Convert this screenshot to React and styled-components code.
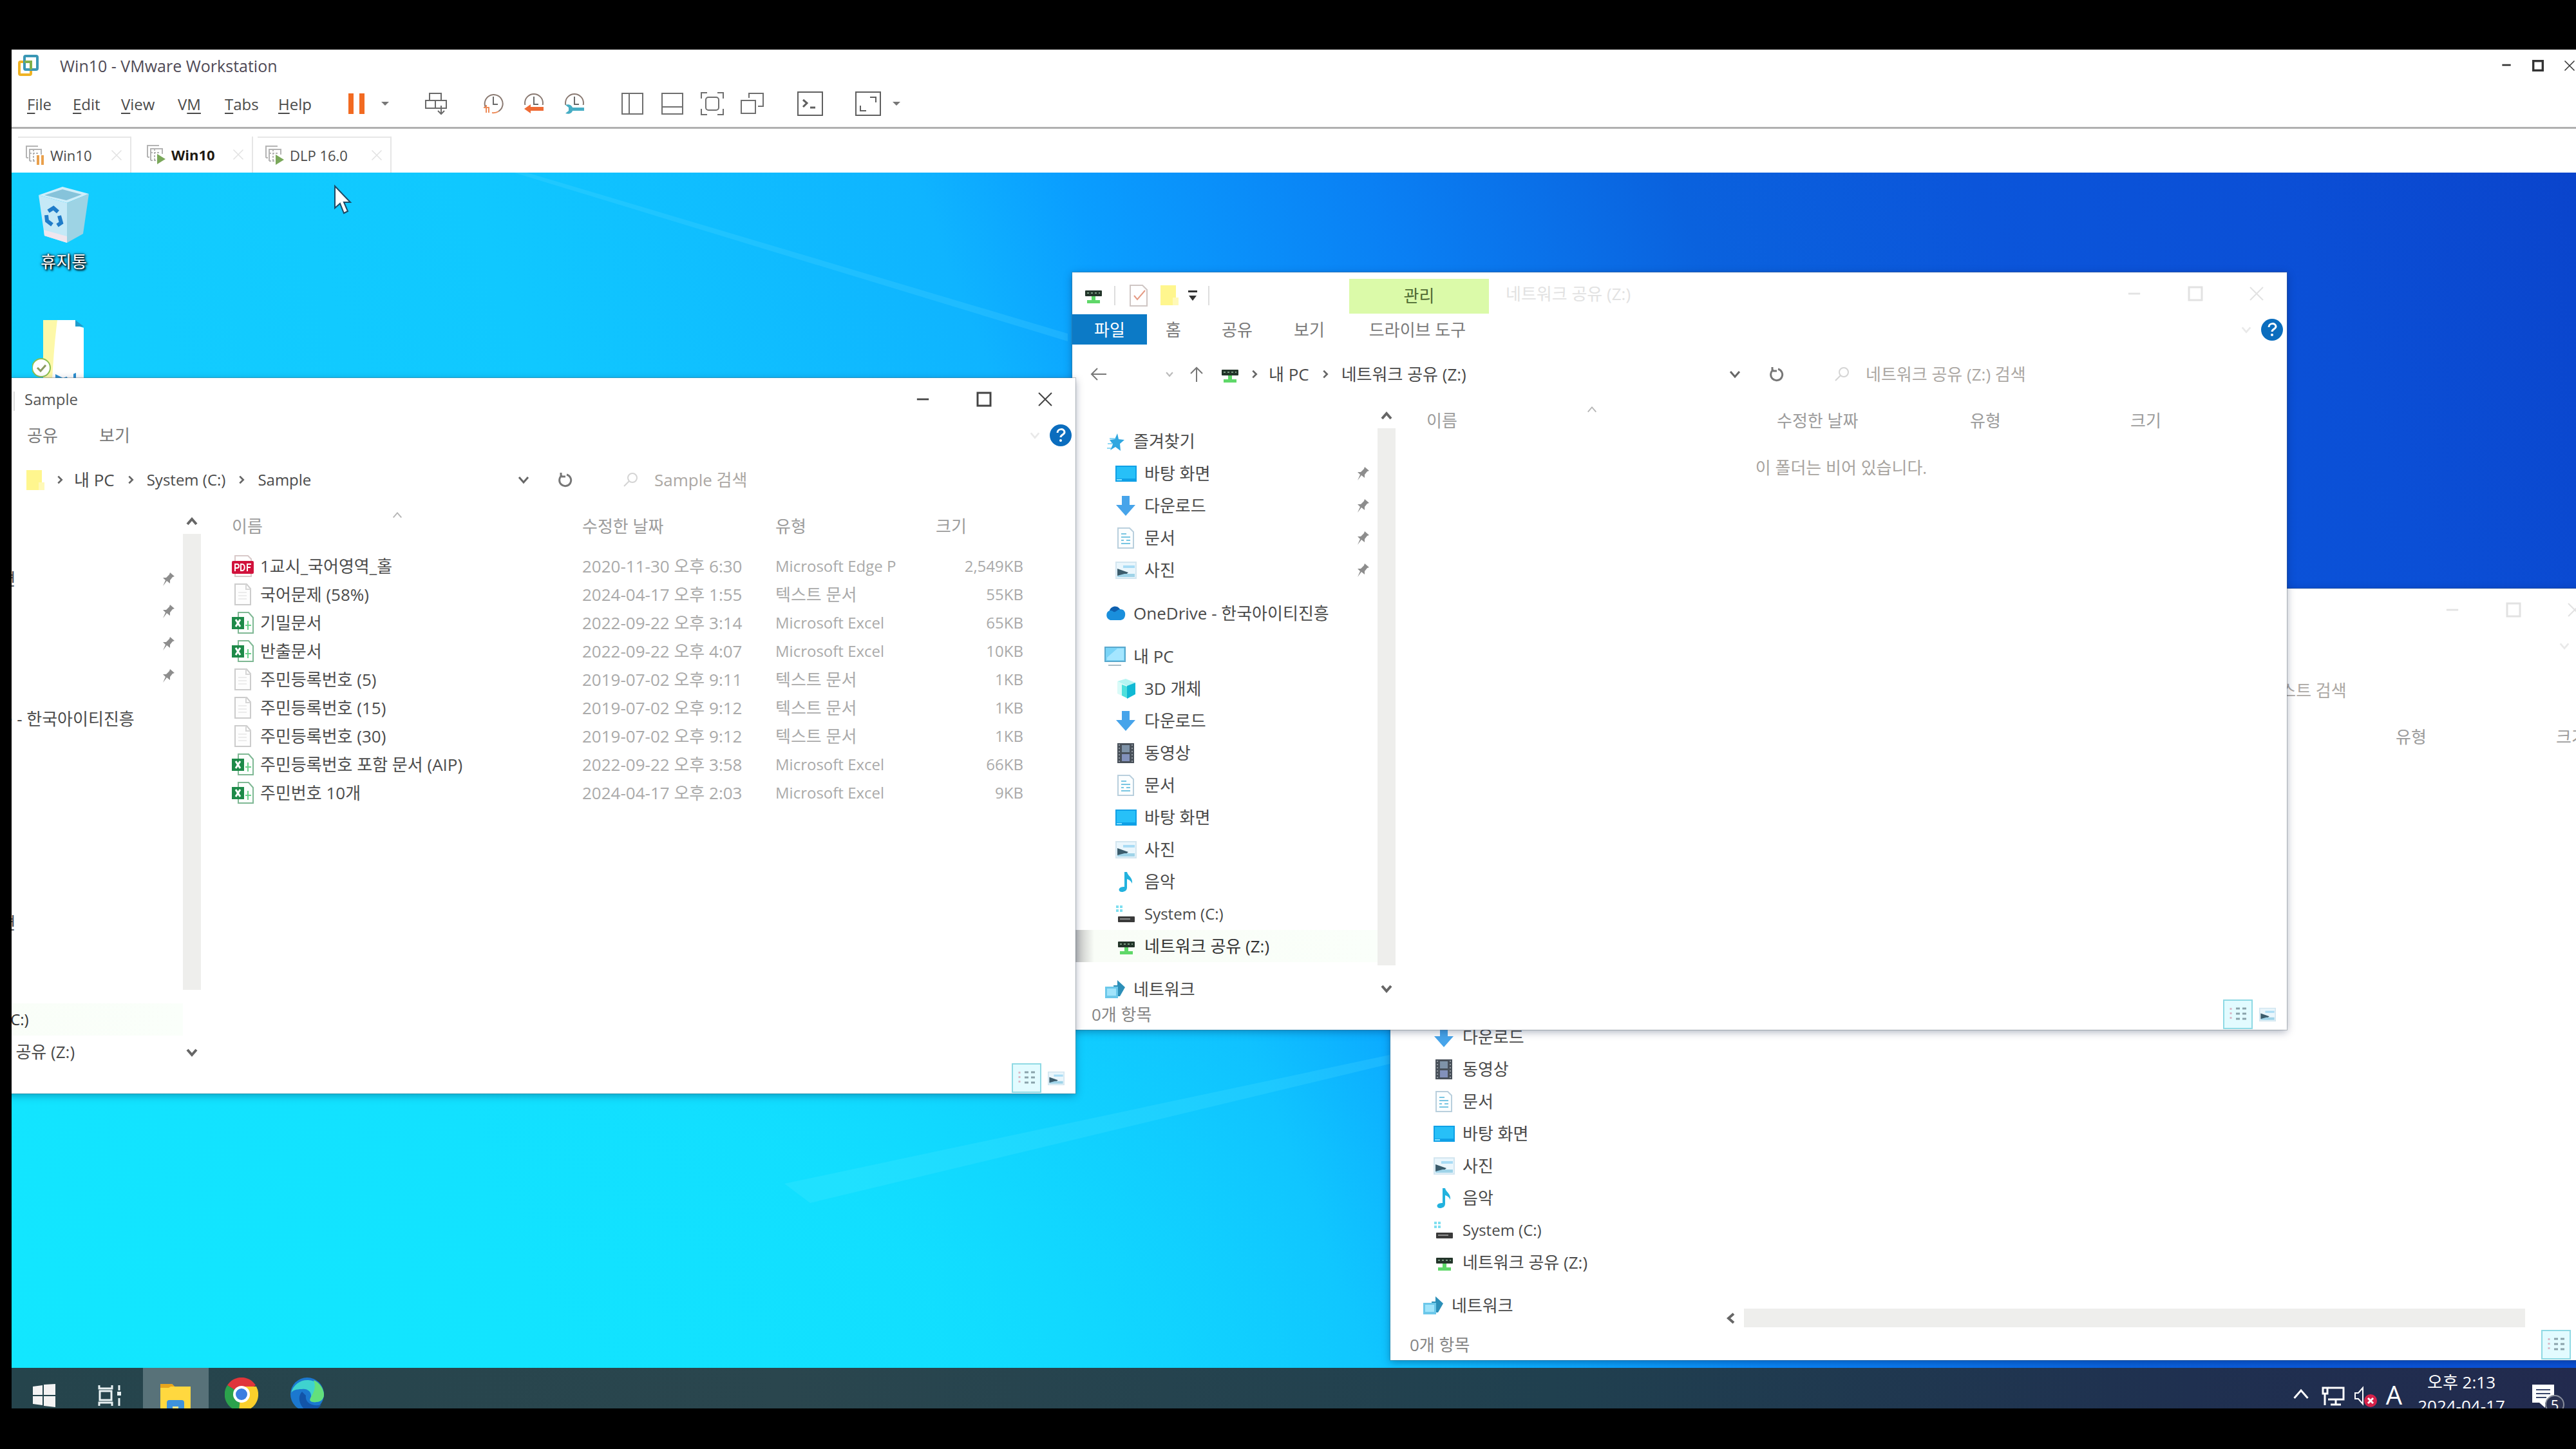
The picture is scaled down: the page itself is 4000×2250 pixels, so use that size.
import React from "react";
import styled, { createGlobalStyle, css } from "styled-components";

const GlobalStyle = createGlobalStyle`
  * {
    box-sizing: border-box;
  }
  body {
    margin: 0;
    background: #000000;
    font-family: "Open Sans", "Noto Sans CJK KR", sans-serif;
    font-size: 26px;
    color: #4a4a4a;
  }
  button,
  input {
    font: inherit;
    color: inherit;
    background: none;
    border: none;
    padding: 0;
    margin: 0;
  }
  a {
    color: inherit;
    text-decoration: none;
  }
  svg {
    display: block;
    flex: none;
  }
`;

/* ---------- icons ---------- */

const VmwareLogo = () => (
  <svg width="34" height="36" viewBox="0 0 34 36" fill="none" strokeWidth="4">
    <rect x="3" y="12" width="18" height="20" rx="2" stroke="#f0b323" />
    <rect x="11" y="3" width="20" height="21" rx="2" stroke="#3a97b5" />
    <path d="M11 12h10v12" stroke="#7fb04a" />
  </svg>
);

const PauseIcon = () => (
  <svg width="28" height="34" viewBox="0 0 28 34" fill="#f26a21">
    <rect x="1" y="1" width="8" height="32" />
    <rect x="18" y="1" width="8" height="32" />
  </svg>
);

const SmallTriangle = () => (
  <svg width="12" height="8" viewBox="0 0 12 8" fill="#777777">
    <path d="M0 1h12L6 7z" />
  </svg>
);

const SendKeysIcon = () => (
  <svg width="36" height="38" viewBox="0 0 36 38" fill="none" stroke="#6a6a6a" strokeWidth="2">
    <rect x="8" y="3" width="18" height="11" />
    <rect x="2" y="14" width="32" height="12" />
    <path d="M17 14v12M26 22v12M21 30l5 5 5-5" />
  </svg>
);

const ClockIcon = ({ kind }) => (
  <svg width="34" height="36" viewBox="0 0 34 36" fill="none" strokeWidth="2">
    {kind === "take" ? (
      <g>
        <path d="M5 24a14 14 0 1 1 20 6" stroke="#8a7a72" />
        <path d="M25 30a14 14 0 0 1-10 2" stroke="#ee8b58" />
        <path d="M2 24h8v8M6 20v12" stroke="#ee8b58" />
      </g>
    ) : (
      <circle cx="17" cy="17" r="14" stroke="#8a7a72" />
    )}
    <path d="M17 7v12h7" stroke="#6a6a6a" />
    {kind === "revert" && (
      <g>
        <path d="M0 20h34v16H0z" fill="#ffffff" />
        <path d="M2 26l10-7v4h20v6H12v4z" fill="#ef6b35" />
      </g>
    )}
    {kind === "manage" && (
      <g>
        <path d="M0 20h34v16H0z" fill="#ffffff" />
        <path d="M3 20c6-2 10 1 11 4h18v5H14c-1 4-6 6-11 4l5-4v-5z" fill="#46adc4" />
      </g>
    )}
  </svg>
);

const PanelLeftIcon = () => (
  <svg width="38" height="38" viewBox="0 0 38 38" fill="none" stroke="#6f6f6f" strokeWidth="2">
    <path d="M3 3h32v32H3zM14 3v32" />
  </svg>
);

const PanelBottomIcon = () => (
  <svg width="38" height="38" viewBox="0 0 38 38" fill="none" stroke="#6f6f6f" strokeWidth="2">
    <path d="M3 3h32v32H3zM3 24h32" />
  </svg>
);

const FitIcon = () => (
  <svg width="38" height="38" viewBox="0 0 38 38" fill="none" stroke="#6f6f6f" strokeWidth="2">
    <path d="M2 11V2h9M27 2h9v9M36 27v9h-9M11 36H2v-9" />
    <rect x="9" y="9" width="20" height="20" rx="4" />
  </svg>
);

const UnityIcon = () => (
  <svg width="38" height="38" viewBox="0 0 38 38" fill="none" stroke="#6f6f6f" strokeWidth="2">
    <rect x="2" y="14" width="22" height="20" />
    <path d="M14 10V3h22v20h-8" />
  </svg>
);

const TerminalIcon = () => (
  <svg width="40" height="38" viewBox="0 0 40 38" fill="none" stroke="#5f5f5f" strokeWidth="2">
    <rect x="1" y="1" width="38" height="36" />
    <path d="M9 13l6 5-6 6M20 25h8" strokeWidth="3" />
  </svg>
);

const FullscreenIcon = () => (
  <svg width="40" height="38" viewBox="0 0 40 38" fill="none" stroke="#5f5f5f" strokeWidth="2">
    <rect x="1" y="1" width="38" height="36" />
    <path d="M23 9h9v8M8 22v8h9" />
  </svg>
);

const VmIcon = ({ paused }) => (
  <svg width="32" height="32" viewBox="0 0 32 32" fill="none" stroke="#b4b4b4" strokeWidth="2">
    <path d="M3 20V2h18M8 25V7h18v8" />
    <path d="M8 13h14M14 7v18M3 20h5M8 25h8" strokeDasharray="3 2" />
    {paused ? (
      <path d="M21 16v15M28 16v15" stroke="#e9a04c" strokeWidth="4" />
    ) : (
      <path d="M18 15l13 8-13 8z" fill="#7aa85a" stroke="none" />
    )}
  </svg>
);

const CloseGlyph = ({ size = 24, width = 2 }) => (
  <svg width={size} height={size} viewBox="0 0 24 24" fill="none" stroke="currentColor" strokeWidth={width}>
    <path d="M2 2l20 20M22 2L2 22" />
  </svg>
);

const MinGlyph = ({ size = 24, width = 3 }) => (
  <svg width={size} height={size} viewBox="0 0 24 24" fill="none" stroke="currentColor" strokeWidth={width}>
    <path d="M2 12h20" />
  </svg>
);

const MaxGlyph = ({ size = 24, width = 3 }) => (
  <svg width={size} height={size} viewBox="0 0 24 24" fill="none" stroke="currentColor" strokeWidth={width}>
    <rect x="2" y="2" width="20" height="20" />
  </svg>
);

const Chevron = ({ dir, size = 20, color = "#666666", width = 3 }) => {
  const paths = {
    up: "M3 14l7-8 7 8",
    down: "M3 6l7 8 7-8",
    left: "M14 3l-8 7 8 7",
    right: "M7 4l6 6-6 6",
  };
  return (
    <svg width={size} height={size} viewBox="0 0 20 20" fill="none" stroke={color} strokeWidth={width}>
      <path d={paths[dir]} />
    </svg>
  );
};

const ArrowIcon = ({ up }) => (
  <svg width="28" height="28" viewBox="0 0 28 28" fill="none" stroke="#777777" strokeWidth="2">
    <path d={up ? "M14 26V4M5 13l9-9 9 9" : "M26 14H4M12 5l-9 9 9 9"} />
  </svg>
);

const RefreshIcon = () => (
  <svg width="24" height="26" viewBox="0 0 24 26" fill="none" stroke="#777777" strokeWidth="3">
    <path d="M15 5a9 9 0 1 1-7 1M6 2v6h7" />
  </svg>
);

const SearchIcon = () => (
  <svg width="26" height="26" viewBox="0 0 26 26" fill="none" stroke="#d4d4d4" strokeWidth="2">
    <circle cx="16" cy="10" r="7" />
    <path d="M11 15l-8 8" />
  </svg>
);

const HelpIcon = () => (
  <svg width="34" height="34" viewBox="0 0 34 34">
    <circle cx="17" cy="17" r="17" fill="#0b6dbe" />
    <path d="M12 13c0-7 11-7 11-1 0 4-6 4-6 8" fill="none" stroke="#ffffff" strokeWidth="3" />
    <circle cx="17" cy="25" r="2" fill="#ffffff" />
  </svg>
);

const PinIcon = () => (
  <svg width="20" height="24" viewBox="0 0 20 24" fill="#8d8d8d">
    <path d="M12 2l7 6-3 1-4 5v5l-5-4-6 8 4-9-4-4h5l5-5z" />
  </svg>
);

const DriveIcon = () => (
  <svg width="33" height="33" viewBox="0 0 33 33">
    <rect x="4" y="9" width="26" height="9" rx="1" fill="#23352a" />
    <path d="M7 13h3M13 13h3M19 13h3M25 13h2" stroke="#7d9c85" strokeWidth="2" />
    <path d="M14 18h6v6h7v5H7v-5h7z" fill="#5fd869" />
  </svg>
);

const SystemDriveIcon = () => (
  <svg width="33" height="33" viewBox="0 0 33 33">
    <path d="M1 3h4v4H1zM7 3h4v4H7zM1 9h4v4H1zM7 9h4v4H7z" fill="#7fdff0" />
    <rect x="4" y="20" width="26" height="9" rx="1" fill="#3a3a3a" />
    <path d="M7 24h16" stroke="#8f8f8f" strokeWidth="2" />
  </svg>
);

const DesktopIcon = () => (
  <svg width="33" height="33" viewBox="0 0 33 33">
    <rect x="0" y="4" width="33" height="25" fill="#0fa0e6" />
    <rect x="2" y="6" width="29" height="18" fill="#27c0f8" />
    <path d="M2 26h8" stroke="#7fe0ff" strokeWidth="2" />
  </svg>
);

const DownloadIcon = () => (
  <svg width="33" height="33" viewBox="0 0 33 33" fill="#47a4ea">
    <path d="M10 1h12v14h9L16 32 1 15h9z" />
  </svg>
);

const DocIcon = () => (
  <svg width="33" height="33" viewBox="0 0 33 33" fill="none" strokeWidth="2">
    <path d="M4 1h18l6 6v25H4z" stroke="#b9cfdd" fill="#fbfeff" />
    <path d="M9 10h8M9 15h14M9 20h4M17 20h6M9 25h14" stroke="#79c6e2" />
  </svg>
);

const PictureIcon = () => (
  <svg width="33" height="33" viewBox="0 0 33 33">
    <rect x="1" y="4" width="31" height="25" fill="#eaf6fc" stroke="#d3e6f0" strokeWidth="2" />
    <path d="M12 9h18v4H12z" fill="#a9dcf5" />
    <path d="M3 14l17 6-6 5H3z" fill="#3b5c6c" />
    <path d="M14 22h16v5H3v-2z" fill="#9fd3e8" />
  </svg>
);

const StarIcon = () => (
  <svg width="33" height="33" viewBox="0 0 33 33">
    <path d="M20 4l2 9 9 1-7 6 1 11-8-6-8 5 4-9-5-7 8-1z" fill="#2fa7e0" />
    <path d="M8 12h8M5 20h8M4 27h6" stroke="#8fd8f4" strokeWidth="2" />
  </svg>
);

const CloudIcon = () => (
  <svg width="33" height="33" viewBox="0 0 33 33">
    <path d="M9 27a8 8 0 0 1-1-15c2-7 12-9 16-2 7 0 9 5 8 10-1 5-4 7-8 7z" fill="#1a8fdc" />
    <path d="M8 12c2-7 12-9 16-2-5 1-6 5-10 4-2-2-4-2-6-2z" fill="#0f5fae" />
  </svg>
);

const PcIcon = () => (
  <svg width="33" height="33" viewBox="0 0 33 33">
    <rect x="1" y="2" width="31" height="22" fill="#7ad4f7" stroke="#5aa8cc" strokeWidth="2" />
    <path d="M4 18L20 4h10v18H4z" fill="#a5e6ff" />
    <path d="M6 30h20" stroke="#a9bcc6" strokeWidth="2" />
  </svg>
);

const CubeIcon = () => (
  <svg width="33" height="33" viewBox="0 0 33 33">
    <path d="M3 5l13-4 15 6-13 5z" fill="#b6f5f2" />
    <path d="M3 5l15 7v19L3 24z" fill="#d9fbf8" />
    <path d="M10 10l8 3v18l-8-4z" fill="#4fe0dc" />
    <path d="M18 12l13-5v18l-13 7z" fill="#10b9d4" />
  </svg>
);

const VideoIcon = () => (
  <svg width="33" height="33" viewBox="0 0 33 33">
    <rect x="3" y="1" width="26" height="31" fill="#49515a" />
    <path d="M6 3v28M26 3v28" stroke="#8f969d" strokeWidth="2" strokeDasharray="2 3" />
    <rect x="10" y="4" width="12" height="11" fill="#7f93a8" />
    <rect x="10" y="18" width="12" height="11" fill="#8291bb" />
  </svg>
);

const MusicIcon = () => (
  <svg width="33" height="33" viewBox="0 0 33 33" fill="#22b2de">
    <path d="M14 1h4c1 6 9 8 8 18-2-4-4-6-8-7v13c0 5-4 7-8 7-5 0-6-5-2-7 2-1 4-1 6-1z" />
  </svg>
);

const NetworkIcon = () => (
  <svg width="33" height="33" viewBox="0 0 33 33">
    <path d="M14 10h6V2l12 11-8 14h-8z" fill="#2c8fb8" />
    <path d="M1 12h20v18H1z" fill="#6cc8ea" />
    <path d="M4 15h14v11H4z" fill="#a0e4fb" />
  </svg>
);

const FolderIcon = () => (
  <svg width="33" height="33" viewBox="0 0 33 33">
    <rect x="3" y="1" width="24" height="31" fill="#fff68e" />
    <path d="M22 20h9v12h-9z" fill="#fff9b8" />
  </svg>
);

const CheckDocIcon = () => (
  <svg width="30" height="34" viewBox="0 0 30 34" fill="none" strokeWidth="2">
    <path d="M2 1h19l7 7v25H2z" stroke="#cfc6c4" />
    <path d="M8 17l5 6 12-14" stroke="#e59b84" />
  </svg>
);

const CustomizeIcon = () => (
  <svg width="16" height="20" viewBox="0 0 16 20" fill="#333333">
    <path d="M1 2h14v3H1zM2 10h12l-6 8z" />
  </svg>
);

const PdfIcon = () => (
  <svg width="34" height="34" viewBox="0 0 34 34">
    <path d="M5 1h20l5 5v27H5z" fill="#ffffff" stroke="#d8c9c9" strokeWidth="2" />
    <rect x="0" y="9" width="34" height="20" rx="2" fill="#d1123c" />
    <path
      d="M5 25V14h3a3 3 0 0 1 0 6H5M14 14v10h2c5 0 5-10 0-10zM24 25V14h6M24 19h5"
      stroke="#ffffff"
      strokeWidth="2"
      fill="none"
    />
  </svg>
);

const TextFileIcon = () => (
  <svg width="34" height="34" viewBox="0 0 34 34" fill="none" strokeWidth="2">
    <path d="M5 1h18l6 7v25H5z" stroke="#cccccc" fill="#fdfdfd" />
    <path d="M22 1v8h7" stroke="#d6d6d6" />
    <path d="M10 14h13M10 19h13M10 24h13" stroke="#ececec" />
  </svg>
);

const ExcelIcon = () => (
  <svg width="34" height="34" viewBox="0 0 34 34" fill="none" strokeWidth="2">
    <path d="M10 1h16l7 8v24H10z" stroke="#7fb894" fill="#fbfffc" />
    <path d="M25 14v14M21 21h9" stroke="#6bd08b" />
    <rect x="0" y="8" width="19" height="19" fill="#1d8a49" />
    <path d="M6 12l7 11M13 12L6 23" stroke="#ffffff" strokeWidth="3" />
  </svg>
);

const DetailsViewIcon = () => (
  <svg width="34" height="32" viewBox="0 0 34 32" strokeWidth="3">
    <path d="M6 6v20" stroke="#d9b8c6" strokeDasharray="3 4" />
    <path d="M14 7h6M24 7h6M14 15h6M24 15h6M14 23h6M24 23h6" stroke="#8aa3ab" />
  </svg>
);

const BinIcon = () => (
  <svg width="80" height="90" viewBox="0 0 80 90">
    <path d="M1 14L38 1l41 11-34 14z" fill="#cfeefa" />
    <path d="M10 14l28-9 30 8-24 9z" fill="#86c3da" />
    <path d="M1 14l44 12v62L10 77z" fill="#c5e9f7" />
    <path d="M45 26l34-14-9 62-25 14z" fill="#9dd3e4" />
    <path d="M9 68l36 10v10L10 77z" fill="#f0e6ee" />
    <path
      d="M16 39l8-5 7 6M33 46l3 11-6 4M22 60l-8-6-1-9"
      fill="none"
      stroke="#1f7cc9"
      strokeWidth="6"
    />
  </svg>
);

const FilesFolderIcon = () => (
  <svg width="84" height="92" viewBox="0 0 84 92">
    <path d="M17 0h50v8l13 4v78H17z" fill="#ffffff" />
    <path d="M17 0h22c-4 30-6 60-8 92H17z" fill="#fdf8a8" />
    <path d="M67 0v10h13z" fill="#1f9ccc" />
    <path d="M36 92v-8l12 6 20-8v10z" fill="#2b8fd0" />
    <path d="M48 78h16v14h-8z" fill="#ffffff" />
    <circle cx="14" cy="74" r="14" fill="#ffffff" stroke="#8bbf4f" strokeWidth="2" />
    <path d="M8 74l5 5 8-9" stroke="#8a9a60" strokeWidth="3" fill="none" />
  </svg>
);

const CursorIcon = () => (
  <svg width="30" height="48" viewBox="0 0 30 48">
    <path d="M3 3v34l8-7 6 15 6-3-6-14h10z" fill="#ffffff" stroke="#1d4a66" strokeWidth="2" />
  </svg>
);

const WindowsLogo = () => (
  <svg width="38" height="36" viewBox="0 0 38 36" fill="#f3f3f3">
    <path d="M1 4l15-2v15H1zM18 1l18-1v17H18zM1 19h15v14L1 31zM18 19h18v17l-18-2z" />
  </svg>
);

const TaskViewIcon = () => (
  <svg width="40" height="34" viewBox="0 0 40 34" fill="none" stroke="#e9f2f3" strokeWidth="3">
    <path d="M3 1v5h20V1M3 33v-5h20v5" />
    <rect x="4" y="10" width="18" height="14" />
    <path d="M34 1v8M34 21v12" />
    <rect x="31" y="11" width="6" height="6" fill="#e9f2f3" stroke="none" />
  </svg>
);

const ExplorerIcon = () => (
  <svg width="48" height="48" viewBox="0 0 48 48">
    <path d="M0 1h18l4 4h25v42H0z" fill="#ffd83f" />
    <path d="M0 1h18l4 4h-6l-3 2H0z" fill="#e8a51c" />
    <path d="M10 30q0-4 4-4h19q4 0 4 4v18h-9V36h-9v12h-9z" fill="#3e92dc" />
    <path d="M19 36h9v12h-9z" fill="#ffe98a" />
  </svg>
);

const ChromeIcon = () => (
  <svg width="52" height="52" viewBox="0 0 52 52">
    <path d="M26 26L4 12a26 26 0 0 1 44 0z" fill="#e0353a" />
    <path d="M26 26L4 12a26 26 0 0 0 18 40z" fill="#2ba24c" />
    <path d="M26 14h23a26 26 0 0 1-27 38z" fill="#fbd02b" />
    <circle cx="26" cy="26" r="13" fill="#ffffff" />
    <circle cx="26" cy="26" r="9" fill="#3b7de0" />
  </svg>
);

const EdgeIcon = () => (
  <svg width="52" height="52" viewBox="0 0 52 52">
    <circle cx="26" cy="26" r="26" fill="#1b78cf" />
    <path d="M1 24A26 26 0 0 1 52 26c0 10-8 13-17 12-6-1-5-4-3-8 1-8-6-13-14-12C9 18 3 20 1 24z" fill="#3fd2cf" />
    <path d="M36 4a26 26 0 0 1 16 22c0 10-8 13-17 12-6-1-5-4-3-8 5-8 8-16 4-26z" fill="#63e07c" />
    <path d="M18 22c-8 8-4 22 6 29 12 3 20-3 24-9-12 4-26-2-24-14z" fill="#1254a8" />
  </svg>
);

const MonitorIcon = () => (
  <svg width="36" height="32" viewBox="0 0 36 32" fill="none" stroke="#ffffff" strokeWidth="3">
    <path d="M10 3h24v18H10M22 21v7M14 29h16M5 12v18" />
    <rect x="2" y="3" width="7" height="9" />
  </svg>
);

const MutedIcon = () => (
  <svg width="36" height="34" viewBox="0 0 36 34">
    <path d="M2 11h5l7-8v25l-7-8H2z" fill="none" stroke="#ffffff" strokeWidth="2" />
    <circle cx="26" cy="23" r="10" fill="#d6224a" />
    <path d="M22 19l8 8M30 19l-8 8" stroke="#ffffff" strokeWidth="3" />
  </svg>
);

const NoticeIcon = () => (
  <svg width="34" height="36" viewBox="0 0 34 36">
    <path d="M0 0h34v28H20v8l-9-8H0z" fill="#ffffff" />
    <path d="M6 8h22M6 14h22M6 20h16" stroke="#39466a" strokeWidth="2" />
  </svg>
);

/* ---------- host window ---------- */

const Screen = styled.div`
  display: flex;
  flex-direction: column;
  height: 100vh;
  padding: 77px 0 63px 18px;
  background: #000000;
  overflow: hidden;
`;

const HostTitle = styled.header`
  display: flex;
  align-items: center;
  height: 50px;
  padding-left: 9px;
  background: #ffffff;
  overflow: hidden;
`;

const HostName = styled.h1`
  flex: 1;
  margin: 0 0 0 32px;
  font-size: 25px;
  font-weight: 400;
  color: #4f4a56;
`;

const HostControls = styled.div`
  display: flex;
  margin-right: -14px;
  color: #333333;
`;

const HostControl = styled.button`
  display: flex;
  justify-content: center;
  width: 49px;
`;

const Toolbar = styled.div`
  display: flex;
  align-items: center;
  height: 73px;
  padding: 0 0 2px 24px;
  background: #ffffff;
  border-bottom: 3px solid #b0b0b0;
`;

const MenuBar = styled.nav`
  display: grid;
  grid-template-columns: 71px 75px 88px 73px 83px 102px;
  font-size: 24px;
`;

const MenuItem = styled.button`
  text-align: left;
  u {
    text-underline-offset: 4px;
  }
`;

const ToolGroup = styled.div`
  display: flex;
  align-items: center;
  gap: ${(p) => p.$gap}px;
  margin-left: ${(p) => p.$left}px;
`;

const ToolButton = styled.button`
  display: flex;
`;

const TabStrip = styled.div`
  display: flex;
  align-items: flex-end;
  height: 68px;
  padding-left: 10px;
  background: #ffffff;
`;

const Tab = styled.div`
  display: flex;
  align-items: center;
  gap: 8px;
  width: ${(p) => p.$width}px;
  height: 56px;
  margin-right: ${(p) => (p.$active ? 7 : 0)}px;
  padding: 0 12px 0 ${(p) => (p.$active ? 22 : 10)}px;
  border: 2px solid #e6e6e6;
  border-width: ${(p) => (p.$active ? "0 2px 0 0" : "2px 2px 0 0")};
  font-size: 22px;
  font-weight: ${(p) => (p.$active ? 700 : 400)};
  color: ${(p) => (p.$active ? "#1f1a12" : "#4a4a4a")};
`;

const TabLabel = styled.button`
  flex: 1;
  text-align: left;
  white-space: nowrap;
`;

const TabClose = styled.button`
  display: flex;
  color: #e2e2e2;
`;

/* ---------- guest desktop ---------- */

const Desktop = styled.main`
  position: relative;
  flex: 1;
  min-height: 0;
  overflow: hidden;
  background: radial-gradient(ellipse at 10% 105%, rgba(18, 232, 255, 0.95) 0%, rgba(18, 232, 255, 0.7) 22%, rgba(18, 232, 255, 0) 46%),
    linear-gradient(
      69deg,
      #12e0ff 0%,
      #12d4ff 8%,
      #12ccff 18%,
      #10c8ff 30%,
      #0fb4ff 45%,
      #0a9eff 50%,
      #0a80f4 60%,
      #0a62de 70%,
      #0b55da 80%,
      #0b4fd6 90%,
      #0a44cc 100%
    );
`;

const LightRays = styled.svg`
  position: absolute;
  inset: 0;
  width: 100%;
  height: 100%;
`;

const Shortcut = styled.button`
  position: absolute;
  left: ${(p) => p.$left}px;
  top: ${(p) => p.$top}px;
  display: flex;
  flex-direction: column;
  align-items: center;
  gap: 9px;
  color: #ffffff;
  line-height: 36px;
  text-shadow: 0 0 3px #000000, 2px 2px 3px #000000, 0 0 5px #17435e;
`;

const Cursor = styled.div`
  position: absolute;
  left: 499px;
  top: 18px;
`;

/* ---------- explorer window ---------- */

const Frame = styled.section`
  position: absolute;
  left: ${(p) => p.$x}px;
  top: ${(p) => p.$y}px;
  width: ${(p) => p.$w}px;
  height: ${(p) => p.$h}px;
  display: flex;
  flex-direction: column;
  background: #ffffff;
  box-shadow: 0 0 0 1px rgba(90, 100, 110, 0.35), 0 3px 12px rgba(0, 20, 60, 0.35);
  line-height: 36px;
  white-space: nowrap;
`;

const TitleRow = styled.div`
  display: flex;
  height: 65px;
`;

const QuickAccess = styled.div`
  display: flex;
  align-items: center;
  width: 228px;
  padding: 6px 0 0 16px;
`;

const Divider = styled.span`
  width: 2px;
  height: 30px;
  margin: 0 ${(p) => p.$right}px 0 ${(p) => p.$left}px;
  background: #dddddd;
`;

const QuickButton = styled.button`
  display: flex;
  margin-right: ${(p) => p.$right || 0}px;
`;

const ToolTab = styled.div`
  width: 217px;
  height: 54px;
  margin: 10px 26px 0 202px;
  background: #dbfaa9;
  color: #4f6b33;
  text-align: center;
  line-height: 52px;
`;

const WindowTitle = styled.h2`
  flex: 1;
  margin: 0;
  padding-top: 2px;
  font-size: ${(p) => (p.$latin ? 24 : 26)}px;
  font-weight: 400;
  line-height: 62px;
  color: ${(p) => (p.$active ? "#555555" : "#e2e2e2")};
`;

const WindowControls = styled.div`
  display: flex;
  color: ${(p) => (p.$active ? "#444444" : "#e2e2e2")};
`;

const WindowControl = styled.button`
  display: flex;
  align-items: center;
  justify-content: center;
  width: 95px;
  height: 66px;
`;

const RibbonRow = styled.div`
  display: flex;
  align-items: center;
  height: 47px;
  padding-right: 6px;
`;

const RibbonTab = styled.button`
  width: ${(p) => p.$width}px;
  height: 47px;
  color: #7a7a7a;
  ${(p) =>
    p.$file &&
    css`
      background: #0c7ac6;
      color: #ffffff;
    `}
`;

const RibbonEnd = styled.div`
  display: flex;
  align-items: center;
  gap: 14px;
  margin-left: auto;
`;

const AddressRow = styled.div`
  display: flex;
  align-items: center;
  height: 92px;
`;

/* the second column is kept for the forward arrow, which is hidden */
const NavButtons = styled.div`
  display: grid;
  grid-template-columns: 28px 82px 28px 14px 28px;
  align-items: center;
  justify-items: center;
  width: 228px;
  padding-left: 27px;
`;

const NavSlot = styled.button`
  display: flex;
  grid-column: ${(p) => p.$col};
`;

const Crumbs = styled.div`
  display: flex;
  align-items: center;
  flex: 1;
`;

const CrumbGap = styled.span`
  display: flex;
  justify-content: center;
  width: ${(p) => p.$width}px;
`;

const Crumb = styled.a`
  font-size: ${(p) => (p.$latin ? 24 : 26)}px;
`;

const AddressTools = styled.div`
  display: flex;
  align-items: center;
  width: 163px;
  gap: 42px;
`;

const SearchBox = styled.label`
  display: flex;
  align-items: center;
  gap: 24px;
  width: 704px;
  input {
    width: 500px;
    outline: none;
  }
  input::placeholder {
    color: #aca8a4;
    opacity: 1;
  }
`;

const Body = styled.div`
  display: flex;
  flex: 1;
  min-height: 0;
`;

const Tree = styled.nav`
  width: 474px;
  padding-top: 33px;
  overflow: hidden;
`;

const TreeGroup = styled.div`
  margin-bottom: 17px;
`;

const TreeItem = styled.a`
  display: flex;
  align-items: center;
  gap: 12px;
  height: 50px;
  padding: 0 12px 0 ${(p) => (p.$child ? 67 : 50)}px;
  font-size: ${(p) => (p.$latin ? 24 : 26)}px;
  ${(p) =>
    p.$selected &&
    css`
      background: linear-gradient(90deg, #b4b4b4 0px, #f9fdf7 34px, #fafffa 470px);
      color: #333333;
    `}
  span {
    flex: 1;
  }
`;

const Scroller = styled.div`
  display: flex;
  flex-direction: column;
  align-items: center;
  width: 28px;
  padding: 9px 0 6px;
`;

const ScrollThumb = styled.div`
  width: 28px;
  height: ${(p) => p.$height}px;
  margin: 9px 0 auto;
  background: #eeeeec;
`;

const Listing = styled.div`
  display: flex;
  flex-direction: column;
  flex: 1;
  min-width: 0;
  padding-left: ${(p) => (p.$scrolls ? 48 : 76)}px;
  overflow: hidden;
`;

const FileTable = styled.table`
  width: ${(p) => p.$name + 685}px;
  table-layout: fixed;
  border-collapse: collapse;
  color: #aaaaaa;
  th,
  td {
    padding: 0;
    font-weight: 400;
    text-align: left;
    overflow: hidden;
  }
  th {
    position: relative;
    height: 66px;
    padding-bottom: 14px;
    color: #9c9c9c;
  }
  td {
    height: 44px;
    line-height: 44px;
  }
`;

const SortMark = styled.span`
  position: absolute;
  left: 248px;
  top: 0;
`;

const FileName = styled.a`
  display: flex;
  align-items: center;
  gap: 10px;
  color: #4c4c4c;
`;

const FileType = styled.td`
  font-size: ${(p) => (p.$latin ? 24 : 26)}px;
`;

const FileSize = styled.td`
  && {
    text-align: right;
  }
  font-size: 24px;
`;

const EmptyNote = styled.p`
  margin: 15px 0 0 -48px;
  text-align: center;
  color: #a8a4a0;
`;

const BottomScroll = styled.div`
  display: flex;
  align-items: center;
  gap: 10px;
  width: 1243px;
  margin: auto 0 3px -31px;
`;

const BottomThumb = styled.div`
  flex: 1;
  height: 29px;
  background: #eeeeec;
`;

const StatusRow = styled.footer`
  display: flex;
  align-items: center;
  justify-content: space-between;
  height: 48px;
  padding: 0 17px 0 30px;
  color: #858585;
`;

const ViewButtons = styled.div`
  display: flex;
  align-items: center;
  gap: 10px;
`;

const ViewButton = styled.button`
  display: flex;
  align-items: center;
  justify-content: center;
  ${(p) =>
    p.$on &&
    css`
      width: 46px;
      height: 46px;
      border: 2px solid #8fd9e4;
      background: #e2fbff;
    `}
  svg {
    width: ${(p) => (p.$on ? 34 : 26)}px;
  }
`;

/* ---------- taskbar ---------- */

const Taskbar = styled.footer`
  display: flex;
  align-items: flex-start;
  height: 63px;
  overflow: hidden;
  background: linear-gradient(90deg, #25444c 0%, #2a464e 30%, #20404f 60%, #1f3050 85%, #222a4e 100%);
  color: #ffffff;
`;

const TaskButton = styled.button`
  display: flex;
  justify-content: center;
  width: 102px;
  height: 100px;
  padding-top: ${(p) => p.$top}px;
  background: ${(p) => (p.$open ? "#587279" : "none")};
`;

const Tray = styled.div`
  display: flex;
  align-items: flex-start;
  margin-left: auto;
  padding-right: 20px;
`;

const TrayItem = styled.button`
  position: relative;
  display: flex;
  margin-right: ${(p) => p.$right}px;
  padding-top: ${(p) => p.$top}px;
  font-size: 40px;
  line-height: 36px;
`;

const Clock = styled.time`
  width: 140px;
  margin: 4px 40px 0 22px;
  text-align: center;
  line-height: 37px;
`;

const Badge = styled.span`
  position: absolute;
  left: 20px;
  top: 42px;
  width: 30px;
  height: 30px;
  border: 2px solid #8a8f9c;
  border-radius: 50%;
  background: #2a3150;
  font-size: 22px;
  line-height: 26px;
  text-align: center;
`;

/* ---------- data ---------- */

const hasHangul = (text) => /[가-힣]/.test(text);

const treeGroups = [
  [
    { label: "즐겨찾기", icon: StarIcon },
    { label: "바탕 화면", icon: DesktopIcon, child: true, pin: true },
    { label: "다운로드", icon: DownloadIcon, child: true, pin: true },
    { label: "문서", icon: DocIcon, child: true, pin: true },
    { label: "사진", icon: PictureIcon, child: true, pin: true },
  ],
  [{ label: "OneDrive - 한국아이티진흥", icon: CloudIcon }],
  [
    { label: "내 PC", icon: PcIcon },
    { label: "3D 개체", icon: CubeIcon, child: true },
    { label: "다운로드", icon: DownloadIcon, child: true },
    { label: "동영상", icon: VideoIcon, child: true },
    { label: "문서", icon: DocIcon, child: true },
    { label: "바탕 화면", icon: DesktopIcon, child: true },
    { label: "사진", icon: PictureIcon, child: true },
    { label: "음악", icon: MusicIcon, child: true },
    { label: "System (C:)", icon: SystemDriveIcon, child: true },
    { label: "네트워크 공유 (Z:)", icon: DriveIcon, child: true },
  ],
  [{ label: "네트워크", icon: NetworkIcon }],
];

const files = [
  { name: "1교시_국어영역_홀", icon: PdfIcon, date: "2020-11-30 오후 6:30", type: "Microsoft Edge P", size: "2,549KB" },
  { name: "국어문제 (58%)", icon: TextFileIcon, date: "2024-04-17 오후 1:55", type: "텍스트 문서", size: "55KB" },
  { name: "기밀문서", icon: ExcelIcon, date: "2022-09-22 오후 3:14", type: "Microsoft Excel", size: "65KB" },
  { name: "반출문서", icon: ExcelIcon, date: "2022-09-22 오후 4:07", type: "Microsoft Excel", size: "10KB" },
  { name: "주민등록번호 (5)", icon: TextFileIcon, date: "2019-07-02 오후 9:11", type: "텍스트 문서", size: "1KB" },
  { name: "주민등록번호 (15)", icon: TextFileIcon, date: "2019-07-02 오후 9:12", type: "텍스트 문서", size: "1KB" },
  { name: "주민등록번호 (30)", icon: TextFileIcon, date: "2019-07-02 오후 9:12", type: "텍스트 문서", size: "1KB" },
  { name: "주민등록번호 포함 문서 (AIP)", icon: ExcelIcon, date: "2022-09-22 오후 3:58", type: "Microsoft Excel", size: "66KB" },
  { name: "주민번호 10개", icon: ExcelIcon, date: "2024-04-17 오후 2:03", type: "Microsoft Excel", size: "9KB" },
];

const menus = [
  ["", "F", "ile"],
  ["", "E", "dit"],
  ["", "V", "iew"],
  ["V", "M", ""],
  ["", "T", "abs"],
  ["", "H", "elp"],
];

function Explorer({ x, y, w, h, title, active, drive, crumbs, search, selected, thumb, nameWidth = 544, rows, status }) {
  const PlaceIcon = drive ? DriveIcon : FolderIcon;
  return (
    <Frame $x={x} $y={y} $w={w} $h={h}>
      <TitleRow>
        <QuickAccess>
          <PlaceIcon />
          <Divider $left={16} $right={21} />
          <QuickButton $right={16} aria-label="속성">
            <CheckDocIcon />
          </QuickButton>
          <QuickButton $right={12} aria-label="새 폴더">
            <FolderIcon />
          </QuickButton>
          <QuickButton aria-label="사용자 지정">
            <CustomizeIcon />
          </QuickButton>
          <Divider $left={16} $right={0} />
        </QuickAccess>
        {drive && <ToolTab>관리</ToolTab>}
        <WindowTitle $active={active} $latin={!hasHangul(title)}>
          {title}
        </WindowTitle>
        <WindowControls $active={active}>
          <WindowControl aria-label="최소화">
            <MinGlyph size={22} />
          </WindowControl>
          <WindowControl aria-label="최대화">
            <MaxGlyph />
          </WindowControl>
          <WindowControl aria-label="닫기">
            <CloseGlyph />
          </WindowControl>
        </WindowControls>
      </TitleRow>
      <RibbonRow>
        <RibbonTab $file $width={116}>
          파일
        </RibbonTab>
        <RibbonTab $width={82}>홈</RibbonTab>
        <RibbonTab $width={116}>공유</RibbonTab>
        <RibbonTab $width={108}>보기</RibbonTab>
        {drive && <RibbonTab $width={228}>드라이브 도구</RibbonTab>}
        <RibbonEnd>
          <Chevron dir="down" size={18} color="#e9e9e9" />
          <HelpIcon />
        </RibbonEnd>
      </RibbonRow>
      <AddressRow>
        <NavButtons>
          <NavSlot $col={1} aria-label="뒤로">
            <ArrowIcon />
          </NavSlot>
          <NavSlot $col={3} aria-label="최근 위치">
            <Chevron dir="down" size={14} color="#bbbbbb" />
          </NavSlot>
          <NavSlot $col={5} aria-label="위로">
            <ArrowIcon up />
          </NavSlot>
        </NavButtons>
        <Crumbs>
          <PlaceIcon />
          {crumbs.map((crumb, i) => (
            <React.Fragment key={crumb}>
              <CrumbGap $width={i === 0 ? 44 : 50}>
                <Chevron dir="right" size={18} />
              </CrumbGap>
              <Crumb href="#" $latin={!hasHangul(crumb)}>
                {crumb}
              </Crumb>
            </React.Fragment>
          ))}
        </Crumbs>
        <AddressTools>
          <Chevron dir="down" />
          <RefreshIcon />
        </AddressTools>
        <SearchBox>
          <SearchIcon />
          <input type="search" placeholder={search} aria-label={search} />
        </SearchBox>
      </AddressRow>
      <Body>
        <Tree>
          {treeGroups.map((group, i) => (
            <TreeGroup key={i}>
              {group.map((item) => (
                <TreeItem
                  key={item.label}
                  href="#"
                  $child={item.child}
                  $latin={!hasHangul(item.label)}
                  $selected={item.label === selected}
                >
                  <item.icon />
                  <span>{item.label}</span>
                  {item.pin && <PinIcon />}
                </TreeItem>
              ))}
            </TreeGroup>
          ))}
        </Tree>
        {thumb && (
          <Scroller>
            <Chevron dir="up" width={4} />
            <ScrollThumb $height={thumb} />
            <Chevron dir="down" width={4} />
          </Scroller>
        )}
        <Listing $scrolls={Boolean(thumb)}>
          <FileTable $name={nameWidth}>
            <colgroup>
              <col width={nameWidth} />
              <col width="300" />
              <col width="249" />
              <col width="136" />
            </colgroup>
            <thead>
              <tr>
                <th>
                  이름
                  <SortMark>
                    <Chevron dir="up" size={18} color="#b5b5b5" width={2} />
                  </SortMark>
                </th>
                <th>수정한 날짜</th>
                <th>유형</th>
                <th>크기</th>
              </tr>
            </thead>
            <tbody>
              {rows.map((file) => (
                <tr key={file.name}>
                  <td>
                    <FileName href="#">
                      <file.icon />
                      {file.name}
                    </FileName>
                  </td>
                  <td>{file.date}</td>
                  <FileType $latin={!hasHangul(file.type)}>{file.type}</FileType>
                  <FileSize>{file.size}</FileSize>
                </tr>
              ))}
            </tbody>
          </FileTable>
          {!rows.length && thumb && <EmptyNote>이 폴더는 비어 있습니다.</EmptyNote>}
          {!thumb && (
            <BottomScroll>
              <Chevron dir="left" width={4} />
              <BottomThumb />
            </BottomScroll>
          )}
        </Listing>
      </Body>
      <StatusRow>
        <span>{status}</span>
        <ViewButtons>
          <ViewButton $on aria-label="자세히">
            <DetailsViewIcon />
          </ViewButton>
          <ViewButton aria-label="큰 아이콘">
            <PictureIcon />
          </ViewButton>
        </ViewButtons>
      </StatusRow>
    </Frame>
  );
}

function App() {
  return (
    <Screen>
      <GlobalStyle />
      <HostTitle>
        <VmwareLogo />
        <HostName>Win10 - VMware Workstation</HostName>
        <HostControls>
          <HostControl aria-label="Minimize">
            <MinGlyph size={16} width={4} />
          </HostControl>
          <HostControl aria-label="Restore">
            <MaxGlyph size={18} width={5} />
          </HostControl>
          <HostControl aria-label="Close">
            <CloseGlyph size={18} />
          </HostControl>
        </HostControls>
      </HostTitle>
      <Toolbar>
        <MenuBar>
          {menus.map(([before, key, after]) => (
            <MenuItem key={before + key + after}>
              {before}
              <u>{key}</u>
              {after}
            </MenuItem>
          ))}
        </MenuBar>
        <ToolGroup $left={6} $gap={24}>
          <ToolButton aria-label="Suspend">
            <PauseIcon />
          </ToolButton>
          <SmallTriangle />
        </ToolGroup>
        <ToolGroup $left={55}>
          <ToolButton aria-label="Send Ctrl+Alt+Del">
            <SendKeysIcon />
          </ToolButton>
        </ToolGroup>
        <ToolGroup $left={54} $gap={29}>
          <ToolButton aria-label="Take snapshot">
            <ClockIcon kind="take" />
          </ToolButton>
          <ToolButton aria-label="Revert snapshot">
            <ClockIcon kind="revert" />
          </ToolButton>
          <ToolButton aria-label="Manage snapshots">
            <ClockIcon kind="manage" />
          </ToolButton>
        </ToolGroup>
        <ToolGroup $left={54} $gap={24}>
          <ToolButton aria-label="Show library">
            <PanelLeftIcon />
          </ToolButton>
          <ToolButton aria-label="Show thumbnails">
            <PanelBottomIcon />
          </ToolButton>
          <ToolButton aria-label="Fit guest">
            <FitIcon />
          </ToolButton>
          <ToolButton aria-label="Unity">
            <UnityIcon />
          </ToolButton>
        </ToolGroup>
        <ToolGroup $left={51}>
          <ToolButton aria-label="Console">
            <TerminalIcon />
          </ToolButton>
        </ToolGroup>
        <ToolGroup $left={50} $gap={18}>
          <ToolButton aria-label="Full screen">
            <FullscreenIcon />
          </ToolButton>
          <SmallTriangle />
        </ToolGroup>
      </Toolbar>
      <TabStrip>
        <Tab $width={176}>
          <VmIcon paused />
          <TabLabel>Win10</TabLabel>
          <TabClose aria-label="Close tab">
            <CloseGlyph size={18} />
          </TabClose>
        </Tab>
        <Tab $active $width={189}>
          <VmIcon />
          <TabLabel>Win10</TabLabel>
          <TabClose aria-label="Close tab">
            <CloseGlyph size={18} />
          </TabClose>
        </Tab>
        <Tab $width={208}>
          <VmIcon />
          <TabLabel>DLP 16.0</TabLabel>
          <TabClose aria-label="Close tab">
            <CloseGlyph size={18} />
          </TabClose>
        </Tab>
      </TabStrip>
      <Desktop>
        <LightRays viewBox="0 0 3982 1856" preserveAspectRatio="none">
          <path d="M800 0L1640 250V262L780 0z" fill="#5fdcff" opacity="0.2" />
          <path d="M1200 1570L2140 1370V1384L1240 1600z" fill="#6ff0ff" opacity="0.15" />
        </LightRays>
        <Shortcut $left={41} $top={21}>
          <BinIcon />
          휴지통
        </Shortcut>
        <Shortcut $left={32} $top={229} aria-label="폴더">
          <FilesFolderIcon />
        </Shortcut>
        <Explorer
          x={2141}
          y={646}
          w={1886}
          h={1198}
          title="클라이언트 테스트"
          crumbs={["내 PC", "클라이언트 테스트"]}
          search="클라이언트 테스트 검색"
          nameWidth={711}
          rows={[]}
          status="0개 항목"
        />
        <Explorer
          x={1647}
          y={155}
          w={1886}
          h={1176}
          drive
          title="네트워크 공유 (Z:)"
          crumbs={["내 PC", "네트워크 공유 (Z:)"]}
          search="네트워크 공유 (Z:) 검색"
          selected="네트워크 공유 (Z:)"
          thumb={834}
          rows={[]}
          status="0개 항목"
        />
        <Explorer
          x={-208}
          y={319}
          w={1860}
          h={1111}
          active
          title="Sample"
          crumbs={["내 PC", "System (C:)", "Sample"]}
          search="Sample 검색"
          selected="System (C:)"
          thumb={708}
          rows={files}
          status="9개 항목"
        />
        <Cursor>
          <CursorIcon />
        </Cursor>
      </Desktop>
      <Taskbar>
        <TaskButton $top={25} aria-label="시작">
          <WindowsLogo />
        </TaskButton>
        <TaskButton $top={26} aria-label="작업 보기">
          <TaskViewIcon />
        </TaskButton>
        <TaskButton $top={24} $open aria-label="파일 탐색기">
          <ExplorerIcon />
        </TaskButton>
        <TaskButton $top={15} aria-label="Chrome">
          <ChromeIcon />
        </TaskButton>
        <TaskButton $top={15} aria-label="Edge">
          <EdgeIcon />
        </TaskButton>
        <Tray>
          <TrayItem $top={26} $right={17} aria-label="숨겨진 아이콘">
            <Chevron dir="up" size={30} color="#ffffff" width={2} />
          </TrayItem>
          <TrayItem $top={28} $right={14} aria-label="네트워크">
            <MonitorIcon />
          </TrayItem>
          <TrayItem $top={28} $right={14} aria-label="음량">
            <MutedIcon />
          </TrayItem>
          <TrayItem $top={24} $right={0}>
            A
          </TrayItem>
          <Clock>
            오후 2:13
            <br />
            2024-04-17
          </Clock>
          <TrayItem $top={26} $right={14} aria-label="알림">
            <NoticeIcon />
            <Badge>5</Badge>
          </TrayItem>
        </Tray>
      </Taskbar>
    </Screen>
  );
}

export default App;
